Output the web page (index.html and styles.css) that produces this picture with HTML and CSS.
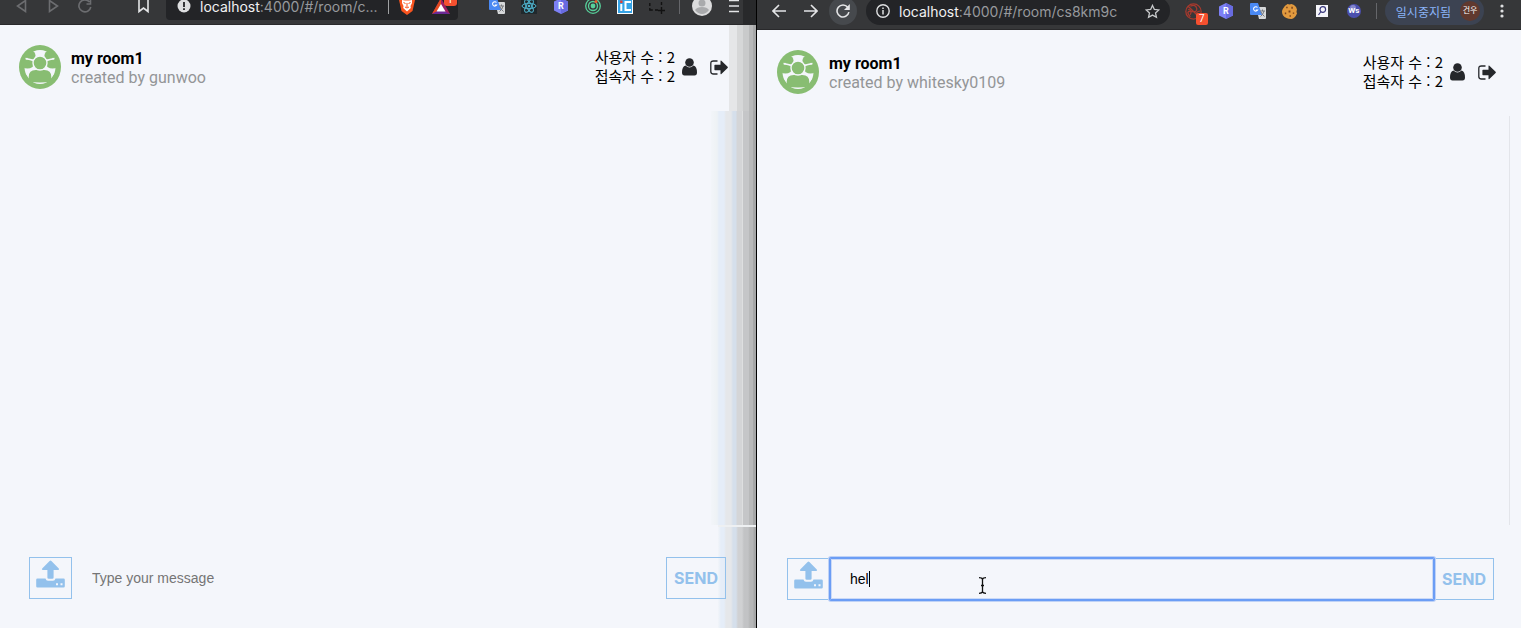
FILE: index.html
```html
<!DOCTYPE html>
<html lang="ko">
<head>
<meta charset="utf-8">
<title>my room1</title>
<link rel="stylesheet" href="styles.css">
</head>
<body>
<svg width="0" height="0" class="defs" aria-hidden="true">
  <symbol id="group" viewBox="0 0 42 44">
    <ellipse cx="21" cy="22" rx="21" ry="22" fill="#88bd72"/>
    <ellipse cx="21" cy="22" rx="15.500" ry="17" fill="#f4f6fb"/>
    <g fill="#88bd72">
      <ellipse cx="8.500" cy="19" rx="6.500" ry="4.500"/><ellipse cx="33.500" cy="19" rx="6.500" ry="4.500"/>
      <circle cx="12" cy="10.500" r="4.500"/><circle cx="30" cy="10.500" r="4.500"/>
      <path d="M9.700 36.500V32q0-7 7-7h8.600q7 0 7 7v4.500q-11.300 2-22.600 0z"/>
      <path d="M6 28l6 9h-6zM36 28l-6 9h6z"/>
    </g>
    <path d="M15.500 15.500L6.500 13.500M26.500 15.500l9-2" stroke="#f4f6fb" stroke-width="1.400"/>
    <circle cx="21" cy="18" r="7" fill="#88bd72" stroke="#f4f6fb" stroke-width="1.400"/>
  </symbol>
  <symbol id="user" viewBox="0 0 15 18">
    <circle cx="7.500" cy="4.500" r="4.300"/><path d="M3.500 7.500Q7.500 11.500 11.500 7.500Q15 8.500 15 14.500Q15 17.500 12.500 17.500h-10Q0 17.500 0 14.500Q0 8.500 3.500 7.500z"/>
  </symbol>
  <symbol id="leave" viewBox="0 0 18 15">
    <path d="M7.500 1H3.500Q.8 1 .8 3.500v8Q.8 14 3.500 14h4" fill="none" stroke="#25272b" stroke-width="1.300"/>
    <path d="M5 4.700h5.500V1.200q0-1 .9-.4l6.200 6q.5.600 0 1.200l-6.200 6q-.9.600-.9-.4V10.300H5q-.6 0-.6-.7V5.300q0-.6.600-.6z"/>
  </symbol>
  <symbol id="upload" viewBox="0 0 29 28">
    <path d="M14.500.5q.5 0 .9.400l7.400 7.600q1 1.200-.6 1.500h-4.600v7.500q0 1.300-1.300 1.300h-3.600q-1.300 0-1.300-1.300V10H6.800q-1.600-.3-.6-1.500L13.600.9q.4-.4.900-.4z"/>
    <path d="M1.500 18.500h8q.5 2.300 2.500 2.300h5q2 0 2.500-2.300h8q1.300 0 1.300 1.300v6.400q0 1.300-1.300 1.300h-26Q.2 27.500.2 26.200v-6.400q0-1.300 1.300-1.300z"/>
    <path d="M20 23.300h2v2h-2zM24.500 23.300h2v2h-2z" fill="#f4f6fb"/>
  </symbol>
  <symbol id="hex" viewBox="0 0 16 16">
    <path d="M8 0l7 3.500v9L8 16l-7-3.500v-9z" fill="#7d80f5"/><path d="M8 0l7 3.500v9L8 16z" fill="#686be0"/>
  </symbol>
  <symbol id="translate" viewBox="0 0 16 16">
    <path d="M6 4h9q1 0 1 1v10q0 1-1 1H9z" fill="#d6d8da"/><path d="M1 0h7l4 12H1q-1 0-1-1V1q0-1 1-1z" fill="#4a89f3"/>
    <path d="M7.500 4.500a2.200 2.200 0 1 0 .2 2.500H5.800" fill="none" stroke="#fff" stroke-width="1.100"/>
    <path d="M10 8h5M12.500 6.500V8M14 8q-1 4-3.500 5.500M11 9q1.500 3 3.500 4.500" fill="none" stroke="#77797d"/>
  </symbol>
</svg>

<main class="desktop">
  <section class="window window-left">
    <div class="bar">
      <button class="tool dim" aria-label="Back"><svg width="12" height="14" viewBox="0 0 12 14"><path d="M10.500 1.500v11L2.500 7z"/></svg></button>
      <button class="tool dim" aria-label="Forward"><svg width="12" height="14" viewBox="0 0 12 14"><path d="M2.500 1.500v11l8-5.500z"/></svg></button>
      <button class="tool dim" aria-label="Reload"><svg width="14" height="14" viewBox="0 0 14 14"><path d="M11.500 3a6 6 0 1 0 1.300 5M12.500 1v4h-4"/></svg></button>
      <button class="tool bookmark" aria-label="Bookmark"><svg width="12" height="16" viewBox="0 0 12 16"><path d="M2 0v13.500L6.500 10l4.500 3.500V0"/></svg></button>
      <div class="address">
        <svg width="14" height="14" viewBox="0 0 14 14"><circle cx="7" cy="7" r="6.500" fill="#dedfe1"/><path d="M7 3v5M7 9.300v1.700" stroke="#232427" stroke-width="1.800"/></svg>
        <span class="url"><b>localhost</b>:4000/#/room/c...</span>
        <i class="rule"></i>
        <svg class="shield" width="16" height="18" viewBox="0 0 16 18"><path d="M3 0h10l3 3-2.500 11L8 18l-5.500-4L0 3z" fill="#f9541f"/><path d="M3 3l3 .6h4L13 3v3l-1.500 3 .3 2L8 14.500 4.200 11l.3-2L3 6z" fill="#fff"/><path d="M4.500 5.500l2 1M11.500 5.500l-2 1M8 6v4M6 10l2 1 2-1" fill="none" stroke="#f9541f"/></svg>
        <span class="rewards"><svg width="18" height="16" viewBox="0 0 18 16"><path d="M9 0L0 16h18z" fill="#9e1f63"/><path d="M9 0L0 16l9-5z" fill="#e34b20"/><path d="M0 16h18l-9-5z" fill="#6a2a96"/><path d="M9 6l-4.500 7.500h9z" fill="#fff"/></svg><span class="count">1</span></span>
      </div>
      <span class="tool"><svg width="16" height="16"><use href="#translate"/></svg></span>
      <span class="tool"><svg width="16" height="16" viewBox="0 0 16 16"><path d="M0 0h16v16H0z" fill="#20282c"/><g fill="none" stroke="#4fb5d0"><ellipse cx="8" cy="8" rx="7" ry="2.700"/><ellipse cx="8" cy="8" rx="7" ry="2.700" transform="rotate(60 8 8)"/><ellipse cx="8" cy="8" rx="7" ry="2.700" transform="rotate(120 8 8)"/></g><circle cx="8" cy="8" r="1.300" fill="#4fb5d0"/></svg></span>
      <span class="tool letter"><svg width="16" height="16"><use href="#hex"/></svg><b>R</b></span>
      <span class="tool"><svg width="16" height="16" viewBox="0 0 16 16"><g fill="none" stroke="#57cf9a" stroke-width="1.300"><circle cx="8" cy="8" r="7.300"/><circle cx="8" cy="8" r="4.500"/></g><circle cx="8" cy="8" r="2.400" fill="#57cf9a"/><circle cx="11" cy="3.500" r="1.500" fill="#e8592b"/></svg></span>
      <span class="tool"><svg width="16" height="16" viewBox="0 0 16 16"><path d="M0 0h16v16H0z" fill="#fff"/><path d="M1 1h14v14H1z" fill="#36a3e6"/><path d="M4.300 6v7M14 4H8.500v8H14" fill="none" stroke="#fff" stroke-width="2"/><path d="M3.200 2.500h2.300V5H3.200z" fill="#e93b30"/></svg></span>
      <span class="tool"><svg width="16" height="16" viewBox="0 0 16 16"><path d="M.8 0v2M.8 5v3M.8 10v2h3M6 12h3M12.500 0v2M12.500 4v3M12.500 9v7M9 12.500h7" fill="none" stroke="#111" stroke-width="1.400"/></svg></span>
      <i class="rule"></i>
      <button class="tool profile" aria-label="Profile"><svg width="20" height="20" viewBox="0 0 20 20"><circle cx="10" cy="10" r="10" fill="#dcdcdd"/><circle cx="10" cy="7" r="3.500" fill="#a9aaac"/><path d="M3 14q2-3 7-3t7 3q-3 4-7 4t-7-4z"/></svg></button>
      <button class="tool" aria-label="Menu"><svg width="10" height="14" viewBox="0 0 10 14"><path d="M0 1.500h10M0 7h10M0 12.500h10"/></svg></button>
    </div>
    <header class="room">
      <svg class="room-icon" width="42" height="44"><use href="#group"/></svg>
      <div class="room-name"><h1>my room1</h1><p>created by gunwoo</p></div>
      <div class="stats"><p>사용자 수 : 2</p><p>접속자 수 : 2</p></div>
      <button class="action" aria-label="Users"><svg width="15" height="18"><use href="#user"/></svg></button>
      <button class="action leave" aria-label="Leave"><svg width="18" height="15"><use href="#leave"/></svg></button>
    </header>
    <div class="messages"></div>
    <form class="composer">
      <button type="button" class="upload" aria-label="Upload"><svg width="29" height="28"><use href="#upload"/></svg></button>
      <div class="field"><input class="entry" type="text" aria-label="Message" placeholder="Type your message"></div>
      <button type="button" class="send">SEND</button>
    </form>
    <div class="shade"><i class="shade-bar"></i><i class="shade-top"></i><i class="shade-body"></i><i class="shade-foot"></i></div>
  </section>

  <section class="window window-right">
    <div class="bar">
      <button class="tool" aria-label="Back"><svg width="14" height="14" viewBox="0 0 14 14"><path d="M14 7H1.500M7 1L1 7l6 6"/></svg></button>
      <button class="tool" aria-label="Forward"><svg width="14" height="14" viewBox="0 0 14 14"><path d="M0 7h12.500M7 1l6 6-6 6"/></svg></button>
      <button class="tool reload" aria-label="Reload"><svg width="14" height="14" viewBox="0 0 14 14"><path d="M11.700 3.200a6 6 0 1 0 1.200 5"/><path d="M13.800 0v6H8z" class="solid"/></svg></button>
      <div class="address">
        <svg width="14" height="14" viewBox="0 0 14 14"><circle cx="7" cy="7" r="6.200" fill="none" stroke="#dedfe1" stroke-width="1.400"/><path d="M7 6v4.500M7 3.500V5" stroke="#dedfe1" stroke-width="1.500"/></svg>
        <span class="url"><b>localhost</b>:4000/#/room/cs8km9c</span>
        <svg class="star" width="15" height="15" viewBox="0 0 16 16"><path d="M8 1.500l2 4.300 4.700.5-3.500 3.200 1 4.700L8 11.800l-4.200 2.400 1-4.700L1.300 6.300 6 5.800z" fill="none" stroke="#c6c8ca" stroke-width="1.400"/></svg>
      </div>
      <span class="tool blocked"><svg width="17" height="17" viewBox="0 0 16 16"><g fill="none" stroke="#a8392d" stroke-width="1.200"><circle cx="8" cy="8" r="7.200"/><path d="M3 3l10 10M5 3q5-2 6 2t-5 3-1 5M3 6q4 1 2 5M10 10q3-3 4-2"/></g></svg><span class="count">7</span></span>
      <span class="tool letter"><svg width="16" height="16"><use href="#hex"/></svg><b>R</b></span>
      <span class="tool"><svg width="16" height="16"><use href="#translate"/></svg></span>
      <span class="tool"><svg width="15" height="15" viewBox="0 0 16 16"><path d="M6 0q2 1 4 0 5 1 6 6-1 2 0 4-2 5-6 6-6 0-9-4-2-4 0-7Q3 1 6 0z" fill="#e29a3e"/><path d="M4.500 3H6v1.500H4.500zM10 3h1.500v2H10zM7 7h2v2H7zM3 9h1.500v2H3zM11.500 9H13v1.500h-1.500zM8 12h1.500v1.500H8z" fill="#78401c"/></svg></span>
      <span class="tool"><svg width="12" height="12" viewBox="0 0 12 12"><path d="M0 0h12v12H0z" fill="#f5f5fa"/><circle cx="6.800" cy="4.500" r="2.800" fill="none" stroke="#38377c" stroke-width="1.200"/><path d="M5 6.500L2.500 10" stroke="#38377c" stroke-width="1.200"/></svg></span>
      <span class="tool letter small"><svg width="14" height="14" viewBox="0 0 14 14"><circle cx="7" cy="7" r="7" fill="#4b4fae"/><circle cx="6" cy="4" r="3" fill="#8688cf"/></svg><b>Ws</b></span>
      <i class="rule"></i>
      <button class="chip">일시중지됨<span class="face">건우</span></button>
      <button class="tool" aria-label="Menu"><svg width="4" height="14" viewBox="0 0 4 14"><g fill="#dedfe1"><circle cx="2" cy="2" r="1.600"/><circle cx="2" cy="7" r="1.600"/><circle cx="2" cy="12" r="1.600"/></g></svg></button>
    </div>
    <header class="room">
      <svg class="room-icon" width="42" height="44"><use href="#group"/></svg>
      <div class="room-name"><h1>my room1</h1><p>created by whitesky0109</p></div>
      <div class="stats"><p>사용자 수 : 2</p><p>접속자 수 : 2</p></div>
      <button class="action" aria-label="Users"><svg width="15" height="18"><use href="#user"/></svg></button>
      <button class="action leave" aria-label="Leave"><svg width="18" height="15"><use href="#leave"/></svg></button>
    </header>
    <div class="messages"></div>
    <form class="composer">
      <button type="button" class="upload" aria-label="Upload"><svg width="29" height="28"><use href="#upload"/></svg></button>
      <div class="field focused"><input class="entry" type="text" aria-label="Message" value="hel"><i class="caret"></i>
        <svg class="pointer" width="9" height="17" viewBox="0 0 9 17"><path d="M1 .7q3 0 3.500 1.500Q5 .7 8 .7M1 16.300q3 0 3.500-1.500.5 1.500 3.500 1.500M4.500 2v13M3 8.500h3" fill="none" stroke="#111" stroke-width="1.300"/></svg>
      </div>
      <button type="button" class="send">SEND</button>
    </form>
  </section>
</main>
</body>
</html>
```

FILE: styles.css
```css
* { box-sizing: border-box; }
body, h1, p { margin: 0; }
body {
  background: #f4f6fb;
  color: #000;
  font-family: Roboto, "Noto Sans CJK KR", sans-serif;
  font-size: 16px;
}
button { border: 0; padding: 0; background: none; font: inherit; color: inherit; }
svg { display: block; flex: none; }
.defs { position: absolute; }

.desktop {
  display: grid;
  grid-template-columns: 757fr 764fr;
  min-height: 100vh;
  overflow: hidden;
}
.window { position: relative; display: flex; flex-direction: column; min-width: 0; }
.window-left { border-right: 1px solid #000; }

/* browser toolbar, its upper edge runs off the screen */
.bar {
  display: flex;
  align-items: center;
  height: 38px;
  background: #363739;
  box-shadow: inset 0 -1px #29292b;
}
.window-left .bar { margin-top: -13px; padding: 0 6px 0 5px; }
.window-right .bar { margin-top: -8px; padding: 0 3px 0 6px; }
.tool {
  position: relative;
  display: flex;
  flex: none;
  align-items: center;
  justify-content: center;
  width: 32px;
  height: 28px;
}
button.tool path { fill: none; stroke: #e4e5e7; stroke-width: 1.600; }
button.tool .solid { fill: #e4e5e7; stroke: none; }
button.dim path { stroke: #6c6d70; }
button.profile path { fill: #a9aaac; stroke: none; }
.bookmark { margin-left: 26px; }
.reload { border-radius: 14px; background: #46494d; width: 28px; margin: 0 2px; }
.letter b {
  position: absolute;
  inset: 0;
  color: #fff;
  font-size: 9px;
  line-height: 28px;
  text-align: center;
}
.small b { font-size: 8px; }
.rule { flex: none; width: 1px; height: 16px; margin: 0 6px; background: #65666a; }
.address {
  display: flex;
  flex: 1;
  align-items: center;
  min-width: 0;
  height: 28px;
  background: #232427;
  color: #97999d;
  font-size: 14px;
}
.window-left .address { margin: 0 23px 0 7px; padding: 0 10px 0 11px; border-radius: 4px; }
.window-right .address { margin: 0 8px 0 7px; padding: 0 10px; border-radius: 14px; }
.url { flex: 1; margin-left: 9px; line-height: 17px; white-space: nowrap; font-family: Inter, sans-serif; }
.url b { color: #f1f1f2; font-weight: 400; }
.window-left .address .rule { margin: 0 10px; background: #a0a1a3; }
.shield { margin-right: 17px; }
.rewards { position: relative; }
.count {
  position: absolute;
  display: block;
  background: #f5502f;
  color: #fff;
  font-size: 10px;
  line-height: 12px;
  text-align: center;
}
.rewards .count { left: 12px; top: -4px; width: 13px; border-radius: 3px; }
.blocked .count { left: 18px; top: 16px; width: 12px; border-radius: 2px; }
.chip {
  display: flex;
  flex: none;
  align-items: center;
  gap: 9px;
  height: 28px;
  margin: 0 2px;
  padding: 0 4px 0 11px;
  border-radius: 14px;
  background: #3c4352;
  color: #8ab4f8;
  font-size: 12px;
}
.face {
  width: 20px;
  border-radius: 10px;
  background: #60392f;
  color: #fff;
  font-size: 8px;
  line-height: 20px;
  text-align: center;
}

.room { display: flex; align-items: center; height: 86px; padding: 0 28px 2px 19px; }
.window-right .room { padding: 0 25px 2px 20px; }
.room-name { margin-left: 10px; padding-top: 2px; line-height: 19px; }
.room-name h1 { font-size: 16px; line-height: 19px; }
.room-name p { color: #939597; }
.stats {
  margin-left: auto;
  padding-bottom: 3px;
  font-family: "Noto Sans CJK KR", sans-serif;
  font-size: 15px;
  line-height: 19px;
}
.action { margin-left: 7px; fill: #25272b; }
.leave { margin-left: 13px; }

.messages { flex: 1; }
.window-right .messages { margin-right: 11px; border-right: 1px solid #e3e5ea; }

.composer { position: relative; z-index: 2; display: flex; height: 103px; padding: 32px 30px 29px 29px; }
.window-right .composer { padding: 33px 27px 28px 30px; }
.upload, .send { flex: none; border: 1px solid #93c1ec; color: #93c1ec; }
.upload { display: grid; justify-content: center; width: 43px; padding: 2px 1px 0 0; fill: #93c1ec; }
.send { width: 60px; font-family: Inter, sans-serif; font-size: 16px; font-weight: 700; }
.field { position: relative; flex: 1; min-width: 0; }
.entry {
  width: 100%;
  height: 100%;
  padding: 0 20px;
  border: 0;
  outline: 0;
  background: none;
  color: #000;
  font: 14px "Liberation Sans", sans-serif;
}
.entry::placeholder { color: #757575; }
.focused .entry {
  border-radius: 1px;
  box-shadow: 0 0 0 1px #6b9df5, 0 0 0 2px #bfd2f6, inset 0 0 0 1px #6b9df5, inset 0 0 0 2px #cbdaf7;
}
.caret { position: absolute; left: 39px; top: 13px; width: 1px; height: 16px; background: #000; }
.pointer { position: absolute; left: 148px; top: 19px; }

/* banded shadow cast by the window on the right */
.shade {
  position: absolute;
  z-index: 1;
  top: 0;
  right: 0;
  bottom: 0;
  display: flex;
  flex-direction: column;
  align-items: flex-end;
  pointer-events: none;
}
.shade-bar { width: 13px; height: 25px; background: #28292b; }
.shade-top {
  width: 27px;
  height: 86px;
  background: linear-gradient(90deg, #e5e6e8 0 8px, #d6d7d8 8px 14px, #c9cacb 14px 20px, #b8b9ba 20px 24px, #a8a9aa 24px);
}
.shade-body {
  flex: 1;
  width: 45px;
  background: linear-gradient(90deg, #f2f5f9 0, #eef2f5 6px, #e5edf8 8px 13px, #e5e7ea 15px 20px, #d5dfeb 22px 25px, #d4d5d7 26px 31px, #dedfe0 31px 32px, #c5c6c8 32px 38px, #b8b9ba 38px 42px, #a5a6a7 42px);
}
.shade-foot {
  width: 38px;
  height: 103px;
  border-top: 2px solid #eef0f2;
  background: linear-gradient(90deg, #f2f5f9 0, #e5edf8 3px 6px, #e5e7ea 8px 13px, #d5dfeb 15px 18px, #d0d1d3 20px 24px, #c2c3c5 26px 30px, #b5b6b7 32px 35px, #a5a6a7 36px);
}
```
